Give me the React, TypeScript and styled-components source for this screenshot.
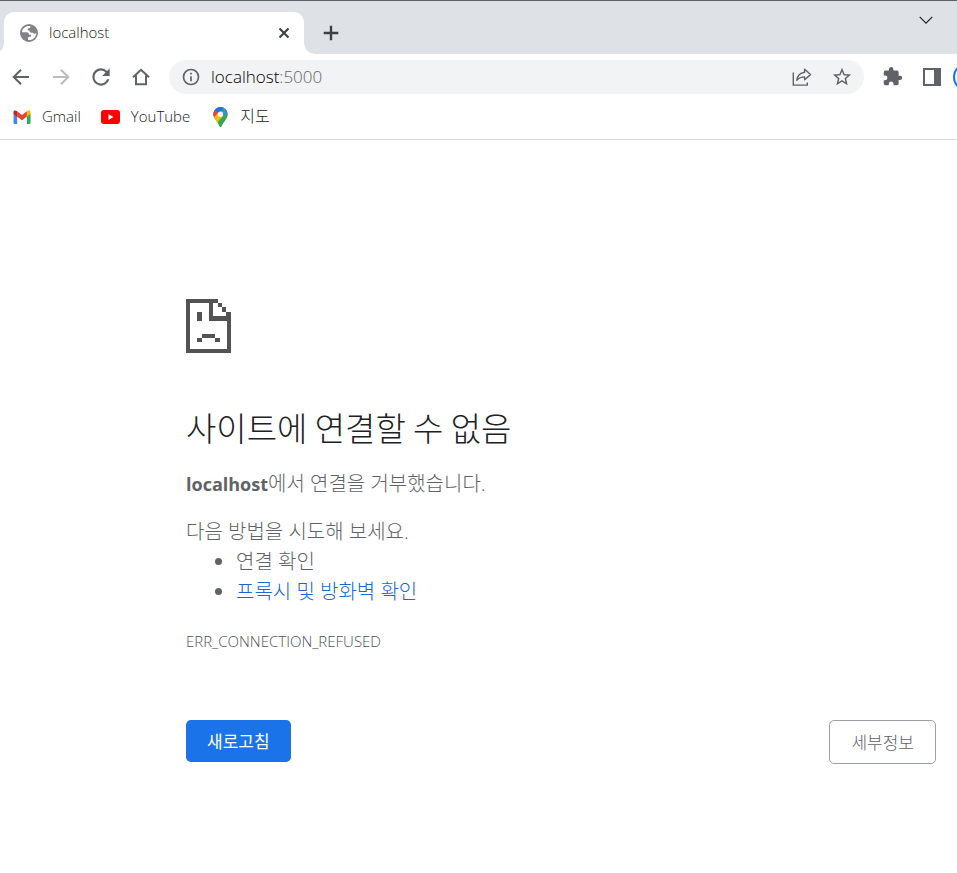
import React from "react";
import styled, { createGlobalStyle } from "styled-components";

const GlobalStyle = createGlobalStyle`
  *, *::before, *::after { box-sizing: border-box; }
  body {
    margin: 0;
    background: #fff;
    color: #202124;
    font-family: "Open Sans", "Noto Sans CJK KR", sans-serif;
    font-weight: 300;
    overflow-x: hidden;
  }
  button, input { font: inherit; color: inherit; }
`;

const Window = styled.div`
  display: flex;
  flex-direction: column;
  border-top: 1px solid #5f6068;
`;

const TabStrip = styled.header`
  display: flex;
  align-items: flex-end;
  height: 53px;
  padding-left: 4px;
  background: #dee1e6;
`;

const Tab = styled.div`
  position: relative;
  display: flex;
  align-items: center;
  width: 300px;
  height: 42px;
  margin-right: 6px;
  padding: 0 10px 0 16px;
  border-radius: 10px 10px 0 0;
  background: #fff;

  &::before,
  &::after {
    content: "";
    position: absolute;
    bottom: 0;
    width: 10px;
    height: 10px;
  }
  &::before {
    right: 100%;
    background: radial-gradient(circle at 0 0, #dee1e6 9px, #fff 10px);
  }
  &::after {
    left: 100%;
    background: radial-gradient(circle at 100% 0, #dee1e6 9px, #fff 10px);
  }
`;

const TabTitle = styled.span`
  flex: 1;
  margin-left: 11px;
  padding-bottom: 2px;
  font-size: 15px;
  line-height: 20px;
`;

const IconButton = styled.button<{ $size?: number; $color?: string }>`
  display: inline-flex;
  flex: none;
  align-items: center;
  justify-content: center;
  width: ${(p) => p.$size ?? 40}px;
  height: ${(p) => p.$size ?? 40}px;
  padding: 0;
  border: 0;
  background: none;
  color: ${(p) => p.$color ?? "#5f6368"};
  cursor: pointer;
`;

const TabSearch = styled.div`
  display: flex;
  align-self: flex-start;
  margin: 9px 21px 0 auto;
`;

const Toolbar = styled.nav`
  display: flex;
  align-items: center;
  height: 45px;
  padding-left: 1px;
  overflow: hidden;
`;

const AddressBar = styled.div`
  display: flex;
  flex: 1;
  align-items: center;
  height: 34px;
  margin: 0 8px;
  padding: 0 2px 0 12px;
  border-radius: 17px;
  background: #f1f3f4;
`;

const AddressField = styled.label`
  position: relative;
  display: flex;
  flex: 1;
  margin-left: 10px;
  font-size: 17px;
  line-height: 24px;
`;

const AddressInput = styled.input`
  width: 100%;
  padding: 0;
  border: 0;
  outline: 0;
  background: none;
  color: transparent;
  caret-color: #202124;
`;

const AddressText = styled.span`
  position: absolute;
  inset: 0;
  color: #5f6368;
  pointer-events: none;
`;

const Host = styled.span`
  color: #000;
`;

const ProfileSlot = styled.div`
  width: 4px;
  height: 28px;
  margin-left: 1px;
  overflow: hidden;
`;

const ProfileButton = styled.button`
  display: block;
  width: 28px;
  height: 28px;
  border: 2px solid #1a73e8;
  border-radius: 50%;
  background: #fff;
`;

const Bookmarks = styled.nav`
  display: flex;
  align-items: center;
  gap: 20px;
  height: 41px;
  padding: 0 12px 5px;
  border-bottom: 1px solid #dadce0;
`;

const Bookmark = styled.a`
  display: flex;
  align-items: center;
  gap: 10px;
  color: #202124;
  font-size: 15px;
  line-height: 20px;
  text-decoration: none;
`;

const BookmarkIcon = styled.span`
  display: flex;
  justify-content: center;
  width: 20px;
`;

const BookmarkLabel = styled.span`
  padding-bottom: 2px;
  &:lang(ko) {
    font-size: 16px;
  }
`;

const ErrorPage = styled.main`
  display: flex;
  flex-direction: column;
  max-width: 957px;
  padding: 159px 21px 48px 186px;
  color: #5f6368;
  font-size: 20px;
  line-height: 30px;
`;

const Title = styled.h1`
  margin: 52px 0 20px;
  color: #202124;
  font-family: "Noto Sans CJK KR", sans-serif;
  font-size: 33px;
  font-weight: 300;
  line-height: 44px;
`;

const Paragraph = styled.p`
  margin: 0 0 18px;
`;

const Hostname = styled.strong`
  font-size: 18px;
  font-weight: 700;
`;

const Hint = styled.p`
  margin: 0;
`;

const Suggestions = styled.ul`
  margin: 0;
  padding-left: 50px;
`;

const TextLink = styled.a`
  color: #1967d2;
  text-decoration: none;
`;

const ErrorCode = styled.p`
  margin: 21px 0 66px;
  color: #4d5156;
  font-size: 15px;
  line-height: 26px;
`;

const Actions = styled.div`
  display: flex;
  align-items: flex-start;
  justify-content: space-between;
`;

const ActionButton = styled.button<{ $primary?: boolean }>`
  height: ${(p) => (p.$primary ? 42 : 44)}px;
  padding: 2px 21px 0;
  border: ${(p) => (p.$primary ? "0" : "1px solid #9aa0a6")};
  border-radius: 5px;
  background: ${(p) => (p.$primary ? "#1a73e8" : "#fff")};
  color: ${(p) => (p.$primary ? "#fff" : "#5f6368")};
  font-size: 17px;
  font-weight: ${(p) => (p.$primary ? 400 : 300)};
  line-height: 24px;
  cursor: pointer;
`;

const svg = (size: number) => ({
  width: size,
  height: size,
  viewBox: "0 0 24 24",
  fill: "currentColor",
  "aria-hidden": true,
});

const GlobeIcon = () => (
  <svg width="18" height="18" viewBox="0 0 18 18" aria-hidden>
    <circle cx="9" cy="9" r="9" fill="#808387" />
    <path
      d="M10.200 2C5.800 1.400 2.300 4.300 1.900 8.200h4.600c1.700 0 2.500.9 2.500 2.600h2v1.600c-1 .2-3 .2-3 1.600v2c4.600.6 8.200-2.600 8.200-7-1.200 1-3.400.8-3.700-.4-1.500.2-3-.4-3-2.200L7.800 6.200c-.4-1.600.6-2.200 2.400-2.200z"
      fill="#fff"
    />
  </svg>
);

const CloseIcon = () => (
  <svg width="12" height="12" viewBox="0 0 12 12" fill="none" stroke="currentColor" strokeWidth="2" aria-hidden>
    <path d="M1.5 1.5l9 9M10.5 1.5l-9 9" />
  </svg>
);

const PlusIcon = () => (
  <svg width="16" height="16" viewBox="0 0 16 16" fill="none" stroke="currentColor" strokeWidth="2.4" aria-hidden>
    <path d="M8 .7v14.6M.7 8h14.6" />
  </svg>
);

const ChevronIcon = () => (
  <svg width="14" height="8" viewBox="0 0 14 8" fill="none" stroke="currentColor" strokeWidth="1.2" aria-hidden>
    <path d="M.7.8 7 7.1 13.3.8" />
  </svg>
);

const BackIcon = () => (
  <svg width="18" height="18" viewBox="0 0 18 18" fill="none" stroke="currentColor" strokeWidth="2" aria-hidden>
    <path d="M17 9H2M9 1.7 1.7 9 9 16.3" />
  </svg>
);

const ForwardIcon = () => (
  <svg width="18" height="18" viewBox="0 0 18 18" fill="none" stroke="currentColor" strokeWidth="2" aria-hidden>
    <path d="M1 9h15M9 1.7 16.3 9 9 16.3" />
  </svg>
);

const ReloadIcon = () => (
  <svg {...svg(26)}>
    <path d="M17.65 6.35A7.96 7.96 0 0 0 12 4a8 8 0 1 0 7.73 10h-2.08A6 6 0 1 1 12 6c1.66 0 3.14.69 4.22 1.78L13 11h7V4z" />
  </svg>
);

const HomeIcon = () => (
  <svg width="18" height="18" viewBox="0 0 18 18" fill="none" stroke="currentColor" strokeWidth="2" aria-hidden>
    <path d="M1 9.3 9 1.8l8 7.5M4 7.5v8.7h10V7.5" />
  </svg>
);

const InfoIcon = () => (
  <svg {...svg(20)} color="#5f6368">
    <path d="M11 7h2v2h-2zm0 4h2v6h-2zm1-9a10 10 0 1 0 0 20 10 10 0 0 0 0-20zm0 18a8 8 0 1 1 0-16 8 8 0 0 1 0 16z" />
  </svg>
);

const ShareIcon = () => (
  <svg width="20" height="18" viewBox="0 0 20 18" fill="none" stroke="currentColor" strokeWidth="1.4" aria-hidden>
    <path d="M1.3 4.5v12.6h14v-2.6" />
    <path d="M12.6 1.3 18.5 6.6l-5.9 5.2V8.9c-3.3 0-5.7.9-7.8 3.4.5-4 3-7.5 7.8-8.1z" strokeLinejoin="round" />
  </svg>
);

const StarIcon = () => (
  <svg {...svg(22)}>
    <path d="M22 9.24l-7.19-.62L12 2 9.19 8.63 2 9.24l5.46 4.73L5.82 21 12 17.27 18.18 21l-1.63-7.03zM12 15.4l-3.76 2.27 1-4.28-3.32-2.88 4.38-.38L12 6.1l1.71 4.04 4.38.38-3.32 2.88 1 4.28z" />
  </svg>
);

const PuzzleIcon = () => (
  <svg {...svg(21)}>
    <path d="M20.5 11H19V7a2 2 0 0 0-2-2h-4V3.5a2.5 2.5 0 0 0-5 0V5H4a2 2 0 0 0-1.99 2v3.8H3.5a2.7 2.7 0 0 1 0 5.4H2V20a2 2 0 0 0 2 2h3.8v-1.5a2.7 2.7 0 0 1 5.4 0V22H17a2 2 0 0 0 2-2v-4h1.500a2.5 2.5 0 0 0 0-5z" />
  </svg>
);

const SidePanelIcon = () => (
  <svg width="18" height="18" viewBox="0 0 18 18" fill="currentColor" fillRule="evenodd" aria-hidden>
    <path d="M0 0h18v18H0zM2 2v14h9V2z" />
  </svg>
);

const GmailIcon = () => (
  <svg width="20" height="14" viewBox="0 0 20 15" aria-hidden>
    <path d="M1 3.500 4.800 6V15H2.200A1.300 1.300 0 0 1 .900 13.700z" fill="#4285f4" />
    <path d="M15.200 6 19.100 3.500v10.200a1.300 1.300 0 0 1-1.300 1.300h-2.600z" fill="#34a853" />
    <path d="M15.200 1.600v5.500l3.900-3V2.300c0-2-2-2.600-3.300-1.200z" fill="#fbbc04" />
    <path d="M4.800 7.100V1.400L10 5.300l5.200-3.900v5.700L10 11z" fill="#ea4335" />
    <path d="M.9 2.300v1.800l3.900 3V1.400l-.6-.4C2.900-.1.900.5.900 2.300z" fill="#c5221f" />
  </svg>
);

const YouTubeIcon = () => (
  <svg width="19" height="14" viewBox="0 0 19 14" aria-hidden>
    <rect width="19" height="14" rx="3" fill="#f00" />
    <path d="M7.500 4v6l5-3z" fill="#fff" />
  </svg>
);

const MapsIcon = () => (
  <svg width="15" height="20" viewBox="0 0 15 20" aria-hidden>
    <defs>
      <clipPath id="pin">
        <path d="M7.500 0A7.100 7.100 0 0 0 .400 7.100c0 2.700 1.300 4.500 2.800 6.600 1.500 2 2.600 3.600 3.400 5.600.3.900 1.500.9 1.800 0 .8-2 1.900-3.600 3.400-5.600 1.500-2.100 2.800-3.900 2.800-6.600A7.100 7.100 0 0 0 7.500 0z" />
      </clipPath>
    </defs>
    <g clipPath="url(#pin)">
      <path d="M0 0h15v20H0z" fill="#34a853" />
      <path d="M0 13.500 12.500-1H0z" fill="#1a73e8" />
      <path d="M-1 4-.5 1l2 1.500L5.500 6 0 12.500z" fill="#ea4335" />
      <path d="M0 11.500 5 6l5 3-7 8z" fill="#fbbc04" />
      <path d="M7.500 7.300 14 0l2 4-5.500 6z" fill="#4285f4" />
      <path d="M10 9.500 15 4v16H4z" fill="#34a853" />
    </g>
    <circle cx="7.500" cy="7.300" r="2.700" fill="#fff" />
  </svg>
);

const SadPageIcon = () => (
  <svg width="45" height="54" viewBox="0 0 134 162" fill="#535353" shapeRendering="crispEdges" aria-hidden>
    <path
      fillRule="evenodd"
      d="M0 0H95V12H107V25H120V38H134V162H0ZM12 12V150H121V65H68V12ZM81 12V52H120V38H107V25H95V12Z"
    />
    <path d="M32 39H46V65H32zM46 105H86V117H46zM32 117H46V129H32zM86 117H100V129H86z" />
  </svg>
);

const bookmarks = [
  { label: "Gmail", lang: "en", icon: <GmailIcon /> },
  { label: "YouTube", lang: "en", icon: <YouTubeIcon /> },
  { label: "지도", lang: "ko", icon: <MapsIcon /> },
];

export default function App() {
  return (
    <>
      <GlobalStyle />
      <Window>
        <TabStrip>
          <Tab>
            <GlobeIcon />
            <TabTitle>localhost</TabTitle>
            <IconButton $size={20} $color="#3c4043" aria-label="Close tab">
              <CloseIcon />
            </IconButton>
          </Tab>
          <IconButton $size={42} $color="#3c4043" aria-label="New tab">
            <PlusIcon />
          </IconButton>
          <TabSearch>
            <IconButton $size={20} $color="#202124" aria-label="Search tabs">
              <ChevronIcon />
            </IconButton>
          </TabSearch>
        </TabStrip>
        <Toolbar>
          <IconButton aria-label="Back"><BackIcon /></IconButton>
          <IconButton $color="#babcbe" aria-label="Forward"><ForwardIcon /></IconButton>
          <IconButton aria-label="Reload"><ReloadIcon /></IconButton>
          <IconButton aria-label="Home"><HomeIcon /></IconButton>
          <AddressBar>
            <InfoIcon />
            <AddressField>
              <AddressInput aria-label="Address" defaultValue="localhost:5000" readOnly />
              <AddressText aria-hidden><Host>localhost</Host>:5000</AddressText>
            </AddressField>
            <IconButton aria-label="Share"><ShareIcon /></IconButton>
            <IconButton aria-label="Bookmark"><StarIcon /></IconButton>
          </AddressBar>
          <IconButton aria-label="Extensions"><PuzzleIcon /></IconButton>
          <IconButton aria-label="Side panel"><SidePanelIcon /></IconButton>
          <ProfileSlot><ProfileButton aria-label="Profile" /></ProfileSlot>
        </Toolbar>
        <Bookmarks>
          {bookmarks.map((b) => (
            <Bookmark key={b.label} href="#">
              <BookmarkIcon>{b.icon}</BookmarkIcon>
              <BookmarkLabel lang={b.lang}>{b.label}</BookmarkLabel>
            </Bookmark>
          ))}
        </Bookmarks>
        <ErrorPage>
          <SadPageIcon />
          <Title>사이트에 연결할 수 없음</Title>
          <Paragraph>
            <Hostname>localhost</Hostname>에서 연결을 거부했습니다.
          </Paragraph>
          <Hint>다음 방법을 시도해 보세요.</Hint>
          <Suggestions>
            <li>연결 확인</li>
            <li><TextLink href="#">프록시 및 방화벽 확인</TextLink></li>
          </Suggestions>
          <ErrorCode>ERR_CONNECTION_REFUSED</ErrorCode>
          <Actions>
            <ActionButton $primary>새로고침</ActionButton>
            <ActionButton>세부정보</ActionButton>
          </Actions>
        </ErrorPage>
      </Window>
    </>
  );
}
